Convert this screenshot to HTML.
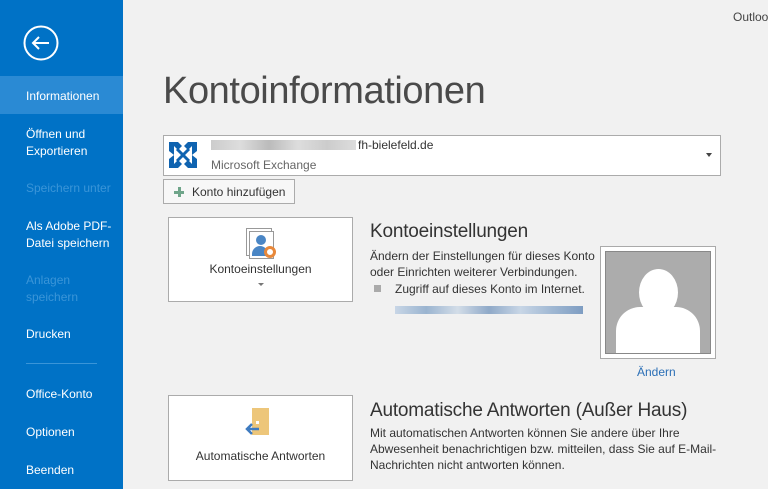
<!DOCTYPE html>
<html><head><meta charset="utf-8"><style>
*{margin:0;padding:0;box-sizing:border-box}
body{width:768px;height:489px;overflow:hidden;background:#f1f1f1;font-family:"Liberation Sans",sans-serif;position:relative;color:#444}
.side{position:absolute;left:0;top:0;width:123px;height:489px;background:#0072c6;color:#fff;font-size:12px}
.side div.it{position:absolute;left:26px;line-height:17px}
.sel{position:absolute;left:0;top:76px;width:123px;height:38px;background:#2a8ad4}
.dis{color:#3a95d8}
.abs{position:absolute}
.box{position:absolute;background:#fff;border:1px solid #c6c6c6}
</style></head><body>
<div class="side">
<svg class="abs" style="left:23px;top:25px" width="36" height="36" viewBox="0 0 36 36"><circle cx="18" cy="18" r="16.5" fill="none" stroke="#fff" stroke-width="2"/><path d="M10 18h16M16 12l-6 6 6 6" fill="none" stroke="#fff" stroke-width="2"/></svg>
<div class="sel"></div>
<div class="it" style="top:88px">Informationen</div>
<div class="it" style="top:126px">Öffnen und<br>Exportieren</div>
<div class="it dis" style="top:180px">Speichern unter</div>
<div class="it" style="top:218px">Als Adobe PDF-<br>Datei speichern</div>
<div class="it dis" style="top:272px">Anlagen<br>speichern</div>
<div class="it" style="top:326px">Drucken</div>
<div class="abs" style="left:26px;top:363px;width:71px;height:1px;background:#3a95d8"></div>
<div class="it" style="top:386px">Office-Konto</div>
<div class="it" style="top:424px">Optionen</div>
<div class="it" style="top:462px">Beenden</div>
</div>
<div class="abs" style="left:733px;top:10px;font-size:12px;color:#444">Outloo</div>
<div class="abs" style="left:163px;top:70px;font-size:38px;color:#4a4a4a;letter-spacing:-0.4px">Kontoinformationen</div>
<div class="box" style="left:163px;top:135px;width:558px;height:41px;border-color:#ababab">
<svg class="abs" style="left:4px;top:4px" width="30" height="30" viewBox="0 0 30 30"><g fill="#0f63b0"><path d="M1 2h9l4 4-4 4-4-4v9l-5-4zM29 2h-9l-4 4 4 4 4-4v9l5-4zM1 28h9l4-4-4-4-4 4v-9l-5 4zM29 28h-9l-4-4 4-4 4 4v-9l5 4z"/><path d="M9 9l12 12M21 9L9 21" stroke="#0f63b0" stroke-width="3"/></g></svg>
<div class="abs" style="left:47px;top:4px;width:145px;height:10px;background:linear-gradient(90deg,#ccc,#ddd,#bbb,#ddd,#ccc,#ddd)"></div>
<div class="abs" style="left:194px;top:2px;font-size:12px;color:#333">fh-bielefeld.de</div>
<div class="abs" style="left:47px;top:22px;font-size:12px;color:#666">Microsoft Exchange</div>
<div class="abs" style="left:542px;top:17px;border:3px solid transparent;border-top:4px solid #444"></div>
</div>
<div class="box" style="left:163px;top:179px;width:132px;height:25px;border-color:#ababab;background:#f7f7f7">
<div class="abs" style="left:10px;top:7px;width:10px;height:10px;background:linear-gradient(#6fa58a,#6fa58a) center/3px 10px no-repeat,linear-gradient(#6fa58a,#6fa58a) center/10px 3px no-repeat"></div>
<div class="abs" style="left:28px;top:5px;font-size:12px;color:#333">Konto hinzufügen</div>
</div>
<div class="box" style="left:168px;top:217px;width:185px;height:85px;border-color:#ababab">
<div class="abs" style="left:77px;top:10px;width:26px;height:28px;border:1px solid #999;background:#fff"></div>
<div class="abs" style="left:80px;top:13px;width:25px;height:28px;border:1px solid #999;background:#fff"></div>
<div class="abs" style="left:87px;top:17px;width:10px;height:10px;border-radius:50%;background:#4a86c5"></div>
<div class="abs" style="left:83px;top:28px;width:16px;height:10px;border-radius:8px 8px 0 0;background:#4a86c5"></div>
<div class="abs" style="left:95px;top:28px;width:12px;height:12px;border-radius:50%;border:3px solid #e8883a;background:#fff"></div>
<div class="abs" style="left:0;width:100%;top:44px;text-align:center;font-size:12px;color:#333">Kontoeinstellungen</div>
<div class="abs" style="left:89px;top:65px;border:3px solid transparent;border-top:3px solid #777"></div>
</div>
<div class="abs" style="left:370px;top:221px;font-size:19px;color:#333;letter-spacing:-0.2px">Kontoeinstellungen</div>
<div class="abs" style="left:370px;top:248px;font-size:12px;line-height:16px;color:#333">Ändern der Einstellungen für dieses Konto<br>oder Einrichten weiterer Verbindungen.</div>
<div class="abs" style="left:374px;top:285px;width:7px;height:7px;background:#aaa"></div>
<div class="abs" style="left:395px;top:282px;font-size:12px;color:#333">Zugriff auf dieses Konto im Internet.</div>
<div class="abs" style="left:395px;top:306px;width:188px;height:8px;background:linear-gradient(90deg,#c8d6e6,#9ab4d0,#d3dde8,#8fa9c8,#c8d6e6,#a0b8d3,#7e9dc2)"></div>
<div class="box" style="left:600px;top:246px;width:116px;height:113px;border-color:#aaa;padding:0">
<div class="abs" style="left:4px;top:4px;width:106px;height:103px;border:1px solid #888;background:#acacac;overflow:hidden">
<div class="abs" style="left:33px;top:17px;width:39px;height:47px;border-radius:50%;background:#fff"></div>
<div class="abs" style="left:10px;top:55px;width:84px;height:60px;border-radius:24px 24px 0 0;background:#fff"></div>
</div></div>
<div class="abs" style="left:637px;top:365px;font-size:12px;color:#2b6fb6">Ändern</div>
<div class="box" style="left:168px;top:395px;width:185px;height:86px;border-color:#ababab">
<div class="abs" style="left:83px;top:12px;width:17px;height:27px;background:#edc67a"></div>
<div class="abs" style="left:87px;top:25px;width:3px;height:3px;background:#fff"></div>
<svg class="abs" style="left:75px;top:26px" width="16" height="14" viewBox="0 0 16 14"><path d="M15 7H3M8 2L3 7l5 5" fill="none" stroke="#3f7bc0" stroke-width="2.5"/></svg>
<div class="abs" style="left:0;width:100%;top:53px;text-align:center;font-size:12px;color:#333">Automatische Antworten</div>
</div>
<div class="abs" style="left:370px;top:400px;font-size:19px;color:#333;letter-spacing:-0.2px">Automatische Antworten (Außer Haus)</div>
<div class="abs" style="left:370px;top:425px;font-size:12px;line-height:16px;color:#333">Mit automatischen Antworten können Sie andere über Ihre<br>Abwesenheit benachrichtigen bzw. mitteilen, dass Sie auf E-Mail-<br>Nachrichten nicht antworten können.</div>
</body></html>
